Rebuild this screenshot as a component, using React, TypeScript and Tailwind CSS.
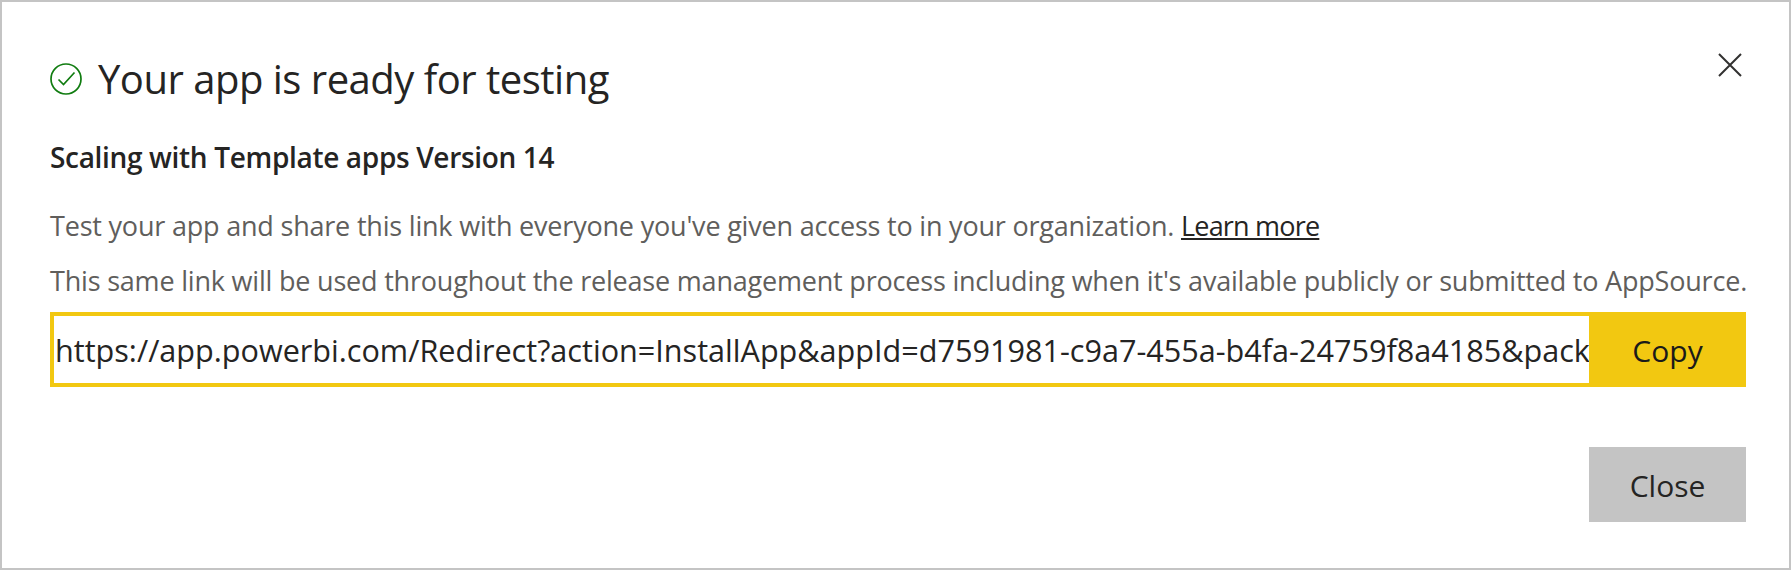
const font = "font-['Open_Sans',sans-serif]"

export default function App() {
  return (
    <div className={`${font} w-[1791px] h-[570px] bg-white border-2 border-[#c4c4c4] pl-[48px] pr-[43px] relative`}>
      <button className="absolute top-[51px] right-[47px] text-[#323130]">
        <svg width="24" height="24" viewBox="0 0 24 24" fill="none" stroke="currentColor" strokeWidth="2">
          <path d="M1 1 L23 23 M23 1 L1 23" />
        </svg>
      </button>

      <div className="flex items-center gap-[16px] pt-[54px] h-[100px]">
        <svg width="32" height="32" viewBox="0 0 32 32" fill="none" stroke="#107c10" strokeWidth="1.7">
          <circle cx="16" cy="16" r="15" />
          <path d="M8.5 16.5 L13.5 21.5 L24.5 9.5" />
        </svg>
        <h1 className="text-[40px] leading-[54px] text-[#252423] font-normal tracking-[-0.5px]">Your app is ready for testing</h1>
      </div>

      <h2 className="mt-[37px] text-[28px] leading-[36px] font-semibold text-[#252423] tracking-[-0.33px]">
        Scaling with Template apps Version 14
      </h2>

      <p className="mt-[33px] text-[27px] leading-[36px] text-[#605e5c] tracking-[-0.2px] whitespace-nowrap">
        Test your app and share this link with everyone you've given access to in your organization.{' '}
        <a className="text-[#252423] underline tracking-[-0.8px]">Learn more</a>
      </p>
      <p className="mt-[19px] text-[27px] leading-[36px] text-[#605e5c] tracking-[-0.2px] whitespace-nowrap">
        This same link will be used throughout the release management process including when it's available publicly or submitted to AppSource.
      </p>

      <div className="mt-[13px] flex h-[75px]">
        <input
          readOnly
          value="https://app.powerbi.com/Redirect?action=InstallApp&appId=d7591981-c9a7-455a-b4fa-24759f8a4185&packageKey=b2df4b6c4f2d4a"
          className="flex-1 min-w-0 border-y-4 border-l-4 border-[#f2c811] pl-[1px] pt-[2px] text-[30.6px] text-[#252423] outline-none"
        />
        <button className="w-[157px] bg-[#f2c811] pt-[2px] text-[30px] text-[#1b1a19]">Copy</button>
      </div>

      <div className="mt-[60px] flex justify-end">
        <button className="w-[157px] h-[75px] bg-[#c4c4c4] pt-[2px] text-[30px] text-[#252423]">Close</button>
      </div>
    </div>
  )
}
